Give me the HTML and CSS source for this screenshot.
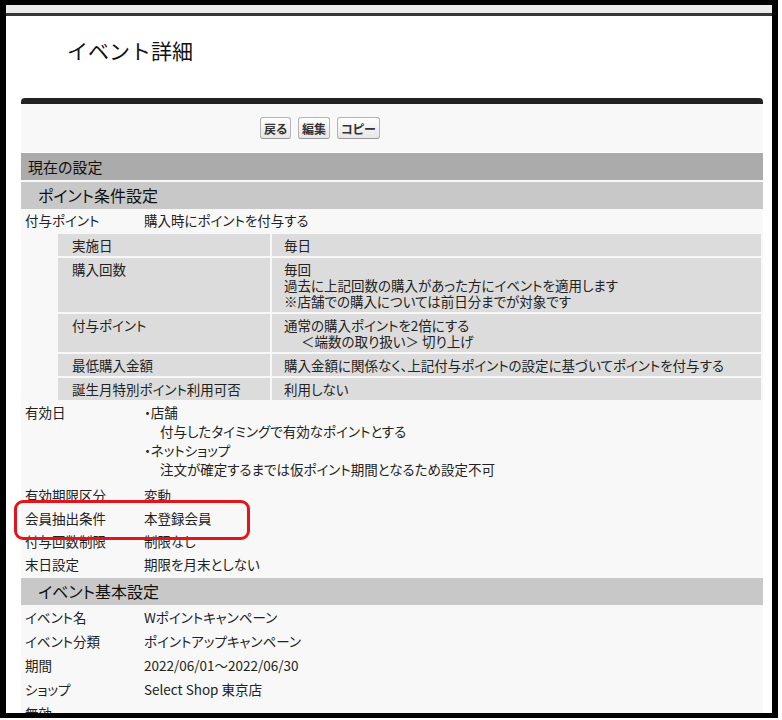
FILE: index.html
```html
<!DOCTYPE html>
<html lang="ja">
<head>
    <meta charset="UTF-8">
    <meta name="viewport" content="width=device-width, initial-scale=1.0">
    <title>イベント詳細</title>
    <link rel="stylesheet" href="styles.css">
</head>
<body>

    <div class="frame">
        <div class="topbar"></div>
        <h1 class="page-title">イベント詳細</h1>

        <div class="panel">
            <!-- Buttons -->
            <div class="btn-row">
                <button class="btn">戻る</button>
                <button class="btn">編集</button>
                <button class="btn">コピー</button>
            </div>

            <div class="section-head">現在の設定</div>

            <!-- Point conditions -->
            <div class="sub-head">ポイント条件設定</div>
            <table class="detail">
                <tr>
                    <td class="label">付与ポイント</td>
                    <td>購入時にポイントを付与する</td>
                </tr>
                <tr>
                    <td colspan="2" class="nested-cell">
                        <table class="inner">
                            <tr>
                                <td class="inner-label">実施日</td>
                                <td>毎日</td>
                            </tr>
                            <tr>
                                <td class="inner-label">購入回数</td>
                                <td>毎回<br>過去に上記回数の購入があった方にイベントを適用します<br>※店舗での購入については前日分までが対象です</td>
                            </tr>
                            <tr>
                                <td class="inner-label">付与ポイント</td>
                                <td>通常の購入ポイントを2倍にする<br><span class="indent">＜端数の取り扱い＞ 切り上げ</span></td>
                            </tr>
                            <tr>
                                <td class="inner-label">最低購入金額</td>
                                <td>購入金額に関係なく、上記付与ポイントの設定に基づいてポイントを付与する</td>
                            </tr>
                            <tr>
                                <td class="inner-label">誕生月特別ポイント利用可否</td>
                                <td>利用しない</td>
                            </tr>
                        </table>
                    </td>
                </tr>
                <tr class="multi">
                    <td class="label">有効日</td>
                    <td>
                        ・店舗<br>
                        <span class="indent-sm">付与したタイミングで有効なポイントとする</span><br>
                        ・ネットショップ<br>
                        <span class="indent-sm">注文が確定するまでは仮ポイント期間となるため設定不可</span>
                    </td>
                </tr>
                <tr>
                    <td class="label">有効期限区分</td>
                    <td>変動</td>
                </tr>
                <tr>
                    <td class="label">会員抽出条件</td>
                    <td>本登録会員</td>
                </tr>
                <tr>
                    <td class="label">付与回数制限</td>
                    <td>制限なし</td>
                </tr>
                <tr>
                    <td class="label">末日設定</td>
                    <td>期限を月末としない</td>
                </tr>
            </table>

            <!-- Event basics -->
            <div class="sub-head">イベント基本設定</div>
            <table class="detail basic">
                <tr>
                    <td class="label">イベント名</td>
                    <td>Wポイントキャンペーン</td>
                </tr>
                <tr>
                    <td class="label">イベント分類</td>
                    <td>ポイントアップキャンペーン</td>
                </tr>
                <tr>
                    <td class="label">期間</td>
                    <td>2022/06/01～2022/06/30</td>
                </tr>
                <tr>
                    <td class="label">ショップ</td>
                    <td>Select Shop 東京店</td>
                </tr>
                <tr>
                    <td class="label">無効</td>
                    <td></td>
                </tr>
            </table>
        </div>

        <!-- Red annotation box -->
        <div class="highlight"></div>
    </div>

</body>
</html>
```

FILE: styles.css
```css
body {
    margin: 0;
    background: #fff;
    font-family: "Noto Sans CJK JP", "Noto Sans", sans-serif;
    font-feature-settings: "palt";
    color: #222;
}
.frame {
    position: relative;
    width: 778px;
    height: 718px;
    box-sizing: border-box;
    border: 5px solid #000;
    border-left-width: 6px;
    border-right-width: 6px;
    overflow: hidden;
    background: #fff;
}
.topbar {
    height: 8px;
    background: #ebebeb;
    border-bottom: 3px solid #363636;
}
.page-title {
    margin: 0;
    padding: 19px 0 0 61px;
    font-size: 21px;
    font-weight: normal;
    line-height: 30px;
    font-feature-settings: normal;
    color: #111;
}
/* Panel */
.panel {
    margin: 33px 0 0 15px;
    width: 742px;
    background: #f8f8f8;
    border-top: 6px solid #222;
    border-radius: 4px 4px 0 0;
    height: 620px;
}
.btn-row {
    display: flex;
    gap: 7px;
    padding: 13px 0 13px 239px;
}
.btn {
    height: 22px;
    padding: 0 3px;
    font-family: inherit;
    font-feature-settings: "palt";
    font-size: 12px;
    font-weight: bold;
    color: #333;
    background: linear-gradient(#ffffff, #e6e6e6);
    border: 1px solid #b3b3b3;
    border-bottom-color: #999;
    border-radius: 3px;
}
.section-head {
    border-top: 1px solid #fff;
    height: 27px;
    line-height: 27px;
    padding-left: 7px;
    background: #ababab;
    font-size: 15px;
    color: #111;
}
.sub-head {
    margin-top: 2px;
    height: 27px;
    line-height: 27px;
    padding-left: 17px;
    background: #c8c8c8;
    font-size: 16px;
    color: #111;
}
/* Detail tables */
.detail {
    width: 100%;
    border-collapse: collapse;
    font-size: 13.5px;
}
.detail td {
    padding: 3px 4px;
    line-height: 17px;
    vertical-align: top;
}
.detail .label {
    width: 111px;
}
.detail.basic td {
    line-height: 18px;
}
.detail .multi td {
    padding: 1px 4px 5px;
    line-height: 19px;
}
.detail .nested-cell {
    padding: 0 0 0 35px;
}
.indent {
    padding-left: 17px;
}
.indent-sm {
    padding-left: 16px;
}
.inner {
    width: 100%;
    border-spacing: 2px;
    font-size: 13.5px;
}
.inner td {
    background: #dcdcdc;
    padding: 3px 12px;
    line-height: 16px;
    vertical-align: top;
}
.inner .inner-label {
    width: 186px;
    padding-left: 14px;
}
/* Red annotation */
.highlight {
    position: absolute;
    left: 8px;
    top: 495px;
    width: 230px;
    height: 34px;
    border: 3px solid #e5141b;
    border-radius: 9px;
}
```
